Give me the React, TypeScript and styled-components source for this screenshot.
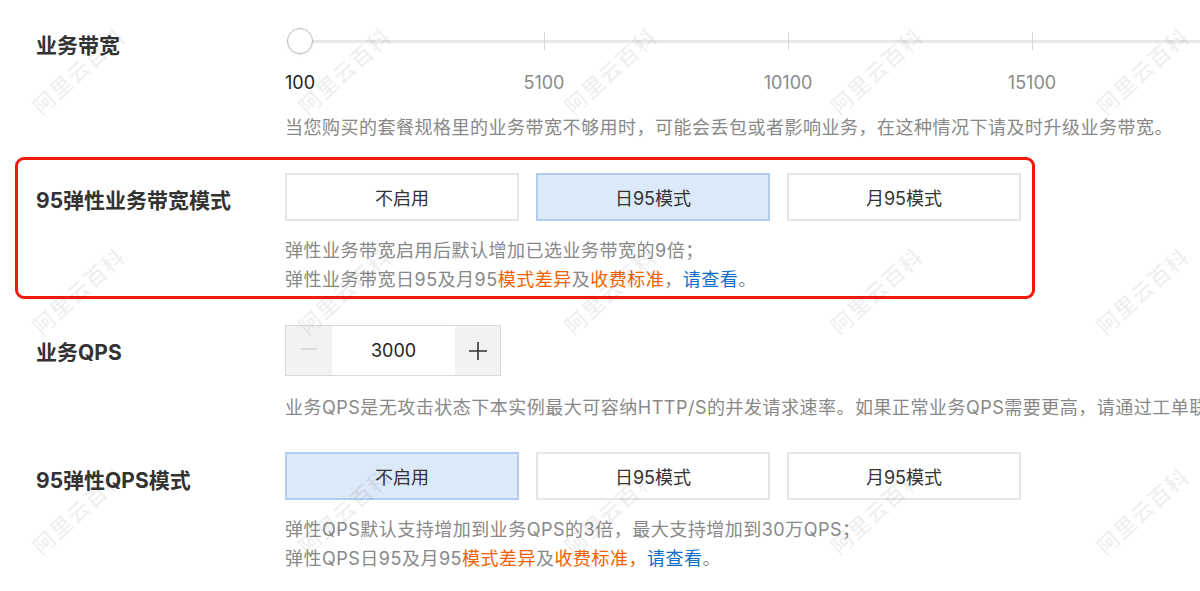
import React from 'react';
import styled, { createGlobalStyle, css } from 'styled-components';

const Global = createGlobalStyle`
  html, body { margin: 0; padding: 0; background: #fff; }
  body {
    font-family: Inter, "Noto Sans CJK SC", sans-serif;
    color: #333;
    -webkit-font-smoothing: antialiased;
  }
`;

const Page = styled.div`
  position: relative;
  width: 1200px;
  height: 591px;
  overflow: hidden;
  padding-left: 36px;
  box-sizing: border-box;
`;

const Row = styled.section<{ $top: number; $highlight?: boolean }>`
  position: relative;
  display: grid;
  grid-template-columns: 249px 1fr;
  margin-top: ${(p) => p.$top}px;
  ${(p) =>
    p.$highlight &&
    css`
      &::after {
        content: '';
        position: absolute;
        top: -16px;
        bottom: -5px;
        left: -21px;
        right: 165px;
        border: 3px solid #f3190c;
        border-radius: 9px;
        pointer-events: none;
      }
    `}
`;

const Label = styled.div<{ $pad: number }>`
  padding-top: ${(p) => p.$pad}px;
  font-size: 21px;
  line-height: 24px;
  font-weight: 700;
  color: #333;
  white-space: nowrap;
`;

const Content = styled.div`
  display: flex;
  flex-direction: column;
  align-items: flex-start;
  min-width: 0;
`;

/* slider */
const Slider = styled.div`
  position: relative;
  margin-left: 15px;
  width: 1000px;
  height: 28px;
  background: linear-gradient(#e8e8e8, #e8e8e8) left center / 100% 3px no-repeat;
`;

const TickRow = styled.div`
  position: absolute;
  top: 5px;
  left: -122px;
  display: flex;
`;

const Tick = styled.span<{ $hidden?: boolean }>`
  width: 244px;
  height: 18px;
  display: flex;
  justify-content: center;
  &::before {
    content: '';
    width: 1px;
    height: 100%;
    background: ${(p) => (p.$hidden ? 'transparent' : '#d6d6d6')};
  }
`;

const Handle = styled.span`
  position: absolute;
  left: -13px;
  top: 1px;
  width: 24px;
  height: 24px;
  border-radius: 50%;
  background: #fff;
  border: 1px solid #bdbdbd;
  box-shadow: 0 1px 2px rgba(0, 0, 0, 0.08);
`;

const Scale = styled.div`
  display: flex;
  margin-left: -107px;
  margin-top: 16px;
`;

const ScaleLabel = styled.span<{ $current?: boolean }>`
  width: 244px;
  text-align: center;
  font-size: 18px;
  line-height: 24px;
  color: ${(p) => (p.$current ? '#222' : '#8a8a8a')};
`;

/* descriptions */
const Desc = styled.div<{ $top: number; $lh: number }>`
  margin-top: ${(p) => p.$top}px;
  font-size: 18px;
  line-height: ${(p) => p.$lh}px;
  color: #888;
  white-space: nowrap;
  letter-spacing: 0.5px;
`;

const Warn = styled.span`
  color: #f26100;
`;

const Link = styled.a`
  color: #0a6fcc;
  text-decoration: none;
`;

/* option buttons */
const Options = styled.div`
  display: flex;
  gap: 17px;
`;

const Option = styled.button<{ $active?: boolean }>`
  width: 234px;
  height: 48px;
  box-sizing: border-box;
  border: 2px solid ${(p) => (p.$active ? '#b0cdee' : '#e6e6e6')};
  background: ${(p) => (p.$active ? '#dce9f8' : '#fff')};
  font-family: Inter, "Noto Sans CJK SC", sans-serif;
  font-size: 18px;
  color: #333;
  padding: 0;
  cursor: pointer;
`;

/* stepper */
const Stepper = styled.div`
  display: flex;
  width: 216px;
  height: 51px;
  box-sizing: border-box;
  border: 1px solid #dadada;
`;

const StepButton = styled.span<{ $width: number; $disabled?: boolean }>`
  width: ${(p) => p.$width}px;
  background: #f2f2f2;
  display: flex;
  align-items: center;
  justify-content: center;
  color: ${(p) => (p.$disabled ? '#cfcfcf' : '#333')};
`;

const StepValue = styled.span`
  flex: 1;
  display: flex;
  align-items: center;
  justify-content: center;
  background: #fff;
  font-size: 18px;
  color: #222;
`;

/* watermark */
const WatermarkLayer = styled.div`
  position: absolute;
  top: -40px;
  left: -55px;
  display: grid;
  grid-template-columns: repeat(6, 266px);
  grid-template-rows: repeat(4, 220px);
  place-items: center;
  pointer-events: none;
`;

const Mark = styled.span`
  transform: rotate(-42deg);
  font-size: 22px;
  font-weight: 700;
  letter-spacing: 1px;
  color: rgba(0, 0, 0, 0.06);
  white-space: nowrap;
  font-family: "Noto Sans CJK SC", sans-serif;
`;

const Minus = () => (
  <svg width="18" height="18" viewBox="0 0 18 18">
    <path d="M1 7h16" stroke="currentColor" strokeWidth="1.4" />
  </svg>
);

const Plus = () => (
  <svg width="20" height="20" viewBox="0 0 20 20">
    <path d="M1 10h18M10 1v18" stroke="currentColor" strokeWidth="1.6" />
  </svg>
);

const modes = ['不启用', '日95模式', '月95模式'];

export default function App() {
  const marks = Array.from({ length: 24 });
  return (
    <>
      <Global />
      <Page>
        <Row $top={27}>
          <Label $pad={7}>业务带宽</Label>
          <Content>
            <Slider>
              <TickRow>
                <Tick $hidden />
                <Tick />
                <Tick />
                <Tick />
                <Tick />
              </TickRow>
              <Handle />
            </Slider>
            <Scale>
              <ScaleLabel $current>100</ScaleLabel>
              <ScaleLabel>5100</ScaleLabel>
              <ScaleLabel>10100</ScaleLabel>
              <ScaleLabel>15100</ScaleLabel>
            </Scale>
            <Desc $top={21} $lh={24}>
              当您购买的套餐规格里的业务带宽不够用时，可能会丢包或者影响业务，在这种情况下请及时升级业务带宽。
            </Desc>
          </Content>
        </Row>

        <Row $top={33} $highlight>
          <Label $pad={16}>95弹性业务带宽模式</Label>
          <Content>
            <Options>
              {modes.map((m, i) => (
                <Option key={m} $active={i === 1}>
                  {m}
                </Option>
              ))}
            </Options>
            <Desc $top={15} $lh={29}>
              弹性业务带宽启用后默认增加已选业务带宽的9倍；
              <br />
              弹性业务带宽日95及月95<Warn>模式差异</Warn>及<Warn>收费标准</Warn>，
              <Link href="#">请查看</Link>。
            </Desc>
          </Content>
        </Row>

        <Row $top={31}>
          <Label $pad={16}>业务QPS</Label>
          <Content>
            <Stepper>
              <StepButton $width={46} $disabled>
                <Minus />
              </StepButton>
              <StepValue>3000</StepValue>
              <StepButton $width={45}>
                <Plus />
              </StepButton>
            </Stepper>
            <Desc $top={20} $lh={24}>
              业务QPS是无攻击状态下本实例最大可容纳HTTP/S的并发请求速率。如果正常业务QPS需要更高，请通过工单联系我们。
            </Desc>
          </Content>
        </Row>

        <Row $top={32}>
          <Label $pad={17}>95弹性QPS模式</Label>
          <Content>
            <Options>
              {modes.map((m, i) => (
                <Option key={m} $active={i === 0}>
                  {m}
                </Option>
              ))}
            </Options>
            <Desc $top={15} $lh={29}>
              弹性QPS默认支持增加到业务QPS的3倍，最大支持增加到30万QPS；
              <br />
              弹性QPS日95及月95<Warn>模式差异</Warn>及<Warn>收费标准，</Warn>
              <Link href="#">请查看</Link>。
            </Desc>
          </Content>
        </Row>

        <WatermarkLayer>
          {marks.map((_, i) => (
            <Mark key={i}>阿里云百科</Mark>
          ))}
        </WatermarkLayer>
      </Page>
    </>
  );
}
